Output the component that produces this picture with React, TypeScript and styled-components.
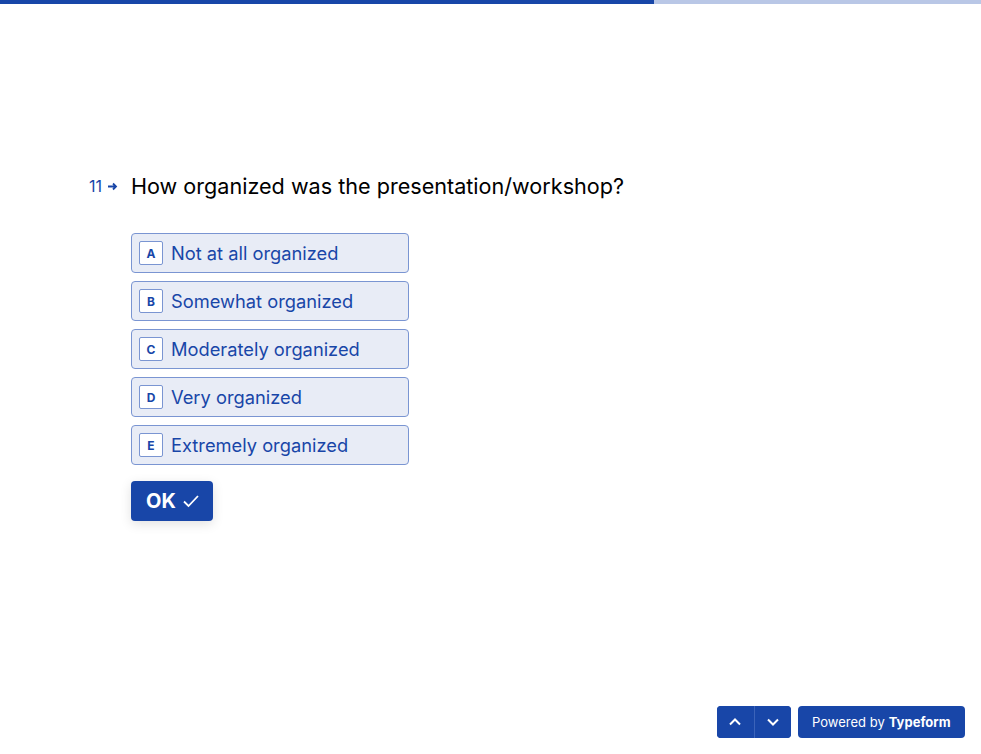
import React from "react";
import styled, { createGlobalStyle } from "styled-components";

const Global = createGlobalStyle`
  html, body { margin: 0; padding: 0; background: #fff; }
  body { font-family: Inter, "Noto Sans", sans-serif; -webkit-font-smoothing: antialiased; }
  #root { min-height: 754px; }
`;

const Page = styled.div`
  position: relative;
  width: 981px;
  height: 754px;
  display: flex;
  flex-direction: column;
`;

const Progress = styled.div`
  display: flex;
  height: 4px;
  background: #b9c7e6;
`;

const ProgressFill = styled.div`
  background: #1846a8;
  height: 100%;
`;

const Main = styled.main`
  flex: 1;
  display: flex;
  padding: 166px 0 0 89px;
`;

const Number = styled.div`
  display: flex;
  align-items: center;
  gap: 5px;
  height: 32px;
  width: 42px;
  color: #1846a8;
  font-size: 16px;
  font-weight: 400;
`;

const Content = styled.div`
  display: flex;
  flex-direction: column;
`;

const Question = styled.h1`
  margin: 0;
  font-size: 21.6px;
  line-height: 32px;
  font-weight: 400;
  color: #000;
`;

const Options = styled.div`
  margin-top: 31px;
  display: flex;
  flex-direction: column;
  gap: 8px;
  width: 278px;
`;

const Option = styled.div`
  box-sizing: border-box;
  height: 40px;
  display: flex;
  align-items: center;
  gap: 8px;
  padding: 0 7px;
  border: 1px solid #7a95d2;
  border-radius: 4px;
  background: #e8ecf6;
  color: #1846a8;
  font-size: 18.3px;
`;

const Key = styled.span`
  box-sizing: border-box;
  width: 24px;
  height: 24px;
  display: flex;
  align-items: center;
  justify-content: center;
  border: 1px solid #7a95d2;
  border-radius: 2px;
  background: #fff;
  font-size: 12px;
  font-weight: 700;
  color: #1846a8;
`;

const OkButton = styled.button`
  margin-top: 16px;
  align-self: flex-start;
  height: 40px;
  padding: 0 13px 0 15px;
  display: flex;
  align-items: center;
  gap: 6px;
  border: none;
  border-radius: 4px;
  background: #1846a8;
  color: #fff;
  font-family: Inter, sans-serif;
  font-size: 20px;
  font-weight: 700;
  box-shadow: 0 3px 12px rgba(0, 0, 0, 0.12);
`;

const Footer = styled.footer`
  position: absolute;
  right: 16px;
  bottom: 16px;
  display: flex;
  gap: 7px;
`;

const NavGroup = styled.div`
  display: flex;
  height: 32px;
  border-radius: 4px;
  overflow: hidden;
  background: #1846a8;
`;

const NavButton = styled.button<{ $divider?: boolean }>`
  width: 37px;
  height: 32px;
  border: none;
  background: #1846a8;
  display: flex;
  align-items: center;
  justify-content: center;
  border-left: ${(p) => (p.$divider ? "1px solid #3b63b9" : "none")};
  padding: 0;
`;

const Powered = styled.div`
  height: 32px;
  padding: 0 14.5px;
  display: flex;
  align-items: center;
  border-radius: 4px;
  background: #1846a8;
  color: #fff;
  font-size: 13px;
  gap: 4px;
  b { font-weight: 700; }
`;

const options = [
  ["A", "Not at all organized"],
  ["B", "Somewhat organized"],
  ["C", "Moderately organized"],
  ["D", "Very organized"],
  ["E", "Extremely organized"],
];

export default function App() {
  return (
    <Page>
      <Global />
      <Progress>
        <ProgressFill style={{ width: `${(654 / 981) * 100}%` }} />
      </Progress>
      <Main>
        <Number>
          11
          <svg width="11" height="11" viewBox="0 0 11 11">
            <path d="M1 5.5h8M6 2.5l3 3-3 3" fill="none" stroke="#1846a8" strokeWidth="1.8" />
          </svg>
        </Number>
        <Content>
          <Question>How organized was the presentation/workshop?</Question>
          <Options>
            {options.map(([k, t]) => (
              <Option key={k}>
                <Key>{k}</Key>
                {t}
              </Option>
            ))}
          </Options>
          <OkButton>
            OK
            <svg width="18" height="14" viewBox="0 0 18 14">
              <path d="M2 7.5l4.5 4.5L16 2" fill="none" stroke="#fff" strokeWidth="1.8" />
            </svg>
          </OkButton>
        </Content>
      </Main>
      <Footer>
        <NavGroup>
          <NavButton>
            <svg width="14" height="10" viewBox="0 0 14 10">
              <path d="M2 7.5L7 2.5l5 5" fill="none" stroke="#fff" strokeWidth="2" />
            </svg>
          </NavButton>
          <NavButton $divider>
            <svg width="14" height="10" viewBox="0 0 14 10">
              <path d="M2 2.5L7 7.5l5-5" fill="none" stroke="#fff" strokeWidth="2" />
            </svg>
          </NavButton>
        </NavGroup>
        <Powered>
          Powered by <b>Typeform</b>
        </Powered>
      </Footer>
    </Page>
  );
}
